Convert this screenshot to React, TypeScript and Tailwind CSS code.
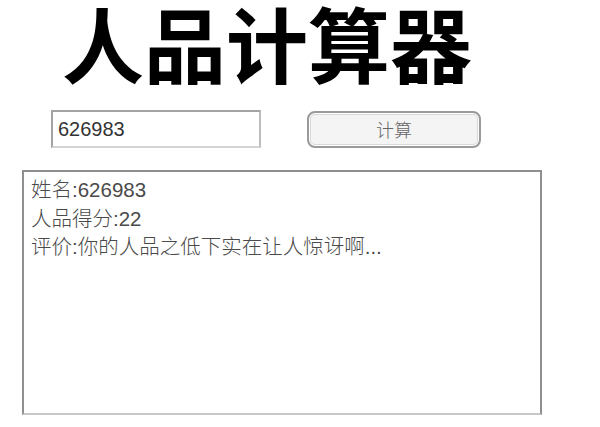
const lines = ['姓名:626983', '人品得分:22', '评价:你的人品之低下实在让人惊讶啊...']

export default function App() {
  return (
    <div className="w-[600px] h-[427px] bg-white overflow-hidden">
      <div className="h-[100px] pl-[62px]">
        <h1
          className="text-[82px] leading-[84px] font-bold text-black"
          style={{ fontFamily: '"Noto Sans CJK SC", sans-serif' }}
        >
          人品计算器
        </h1>
      </div>
      <div className="flex items-start pl-[51px] pt-[10px] gap-[46px]">
        <div className="w-[210px] h-[38px] border-2 border-[#a3a3a3] border-b-[#d4d4d4] border-r-[#bdbdbd] bg-white flex items-center pl-[5px]">
          <span
            className="text-[20px] text-[#333]"
            style={{ fontFamily: '"Liberation Sans", sans-serif' }}
          >
            626983
          </span>
        </div>
        <button
          className="mt-[1px] w-[174px] h-[37px] rounded-[8px] border-2 border-[#9a9a9a] bg-[#f4f4f4] shadow-[inset_0_0_0_1px_#ffffff,inset_0_0_0_2px_#d8d8d8] flex items-center justify-center text-[18px] text-[#666] font-light"
          style={{ fontFamily: '"Noto Sans CJK SC", sans-serif' }}
        >
          计算
        </button>
      </div>
      <div className="ml-[22px] mt-[22px] w-[520px] h-[245px] border-2 border-[#8f8f8f] border-b-[#c8c8c8] bg-white pl-[7px] pt-[4px]">
        {lines.map((line) => (
          <div
            key={line}
            className="text-[20.5px] leading-[28.5px] text-[#4a4a4a] font-light"
            style={{ fontFamily: '"Liberation Sans", "Noto Sans CJK SC", sans-serif' }}
          >
            {line}
          </div>
        ))}
      </div>
    </div>
  )
}
